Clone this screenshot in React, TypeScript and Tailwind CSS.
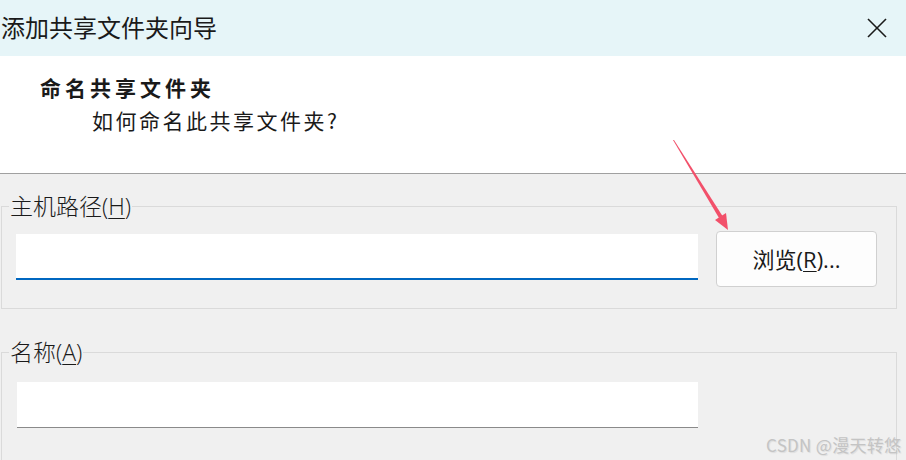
import React from 'react';

const cjk = { fontFamily: '"Noto Sans CJK SC", "Noto Sans", sans-serif' };
const ui = { fontFamily: '"Open Sans", "Noto Sans CJK SC", sans-serif' };

// Underlined access key, like Windows dialogs
const Key = ({ k }: { k: string }) => <span className="underline underline-offset-[3px] decoration-1">{k}</span>;

const CloseIcon = () => (
  <svg width="20" height="20" viewBox="0 0 20 20" fill="none" stroke="#1a1a1a" strokeWidth="1.6">
    <line x1="1" y1="1" x2="19" y2="19" />
    <line x1="19" y1="1" x2="1" y2="19" />
  </svg>
);

// red annotation arrow pointing at the browse button
const Arrow = () => (
  <svg className="absolute left-0 top-0 pointer-events-none" width="906" height="460">
    <polygon points="673,140 674,140 722.5,216 719,218" fill="#f2506a" />
    <polygon points="728,230 726,213 715,220" fill="#f2506a" />
  </svg>
);

export default function App() {
  return (
    <div className="relative w-[906px] h-[460px] overflow-hidden bg-[#f0f0f0] text-[#1a1a1a]" style={cjk}>
      {/* title bar */}
      <div className="h-[56px] bg-[#e6f5f8] flex items-center justify-between">
        <span className="text-[24px] leading-none pl-[1px] -mt-[2px]">添加共享文件夹向导</span>
        <div className="pr-[19px] -mt-[1px]">
          <CloseIcon />
        </div>
      </div>

      {/* header */}
      <div className="h-[118px] bg-white border-b border-[#a0a0a0] pt-[18px]">
        <div className="pl-[40px] text-[21px] font-bold tracking-[4px] leading-[26px]">命名共享文件夹</div>
        <div className="pl-[92px] mt-[7px] text-[21px] tracking-[2.5px] leading-[26px]">如何命名此共享文件夹?</div>
      </div>

      {/* host path */}
      <fieldset className="mt-[18px] ml-[1px] w-[896px] border border-[#dadada] px-0 pb-[21px]">
        <legend className="ml-[7px] px-[1px] text-[23px] leading-[28px] font-light" style={ui}>
          主机路径(<Key k="H" />)
        </legend>
        <div className="flex items-start mt-[11px]">
          <div className="ml-[14px] mt-[3px] w-[682px] h-[46px] bg-white border-b-2 border-[#0067c0]" />
          <button
            className="ml-[18px] w-[161px] h-[56px] rounded-[4px] bg-[#fdfdfd] border border-[#d0d0d0] text-[22px] leading-none"
            style={ui}
          >
            浏览(<Key k="R" />)...
          </button>
        </div>
      </fieldset>

      {/* name */}
      <fieldset className="mt-[29px] ml-[1px] w-[896px] border border-[#dadada] px-0 pb-[40px]">
        <legend className="ml-[7px] px-[1px] text-[23px] leading-[28px] font-light" style={ui}>
          名称(<Key k="A" />)
        </legend>
        <div className="ml-[15px] mt-[16px] w-[681px] h-[46px] bg-white border-b border-[#8a8a8a]" />
      </fieldset>

      <div
        className="absolute left-[766px] top-[432px] text-[17px] text-[#c4c4c4] tracking-[0.3px]"
        style={{ textShadow: '1px 1px 1px rgba(0,0,0,0.08)' }}
      >
        CSDN @漫天转悠
      </div>

      <Arrow />
    </div>
  );
}
